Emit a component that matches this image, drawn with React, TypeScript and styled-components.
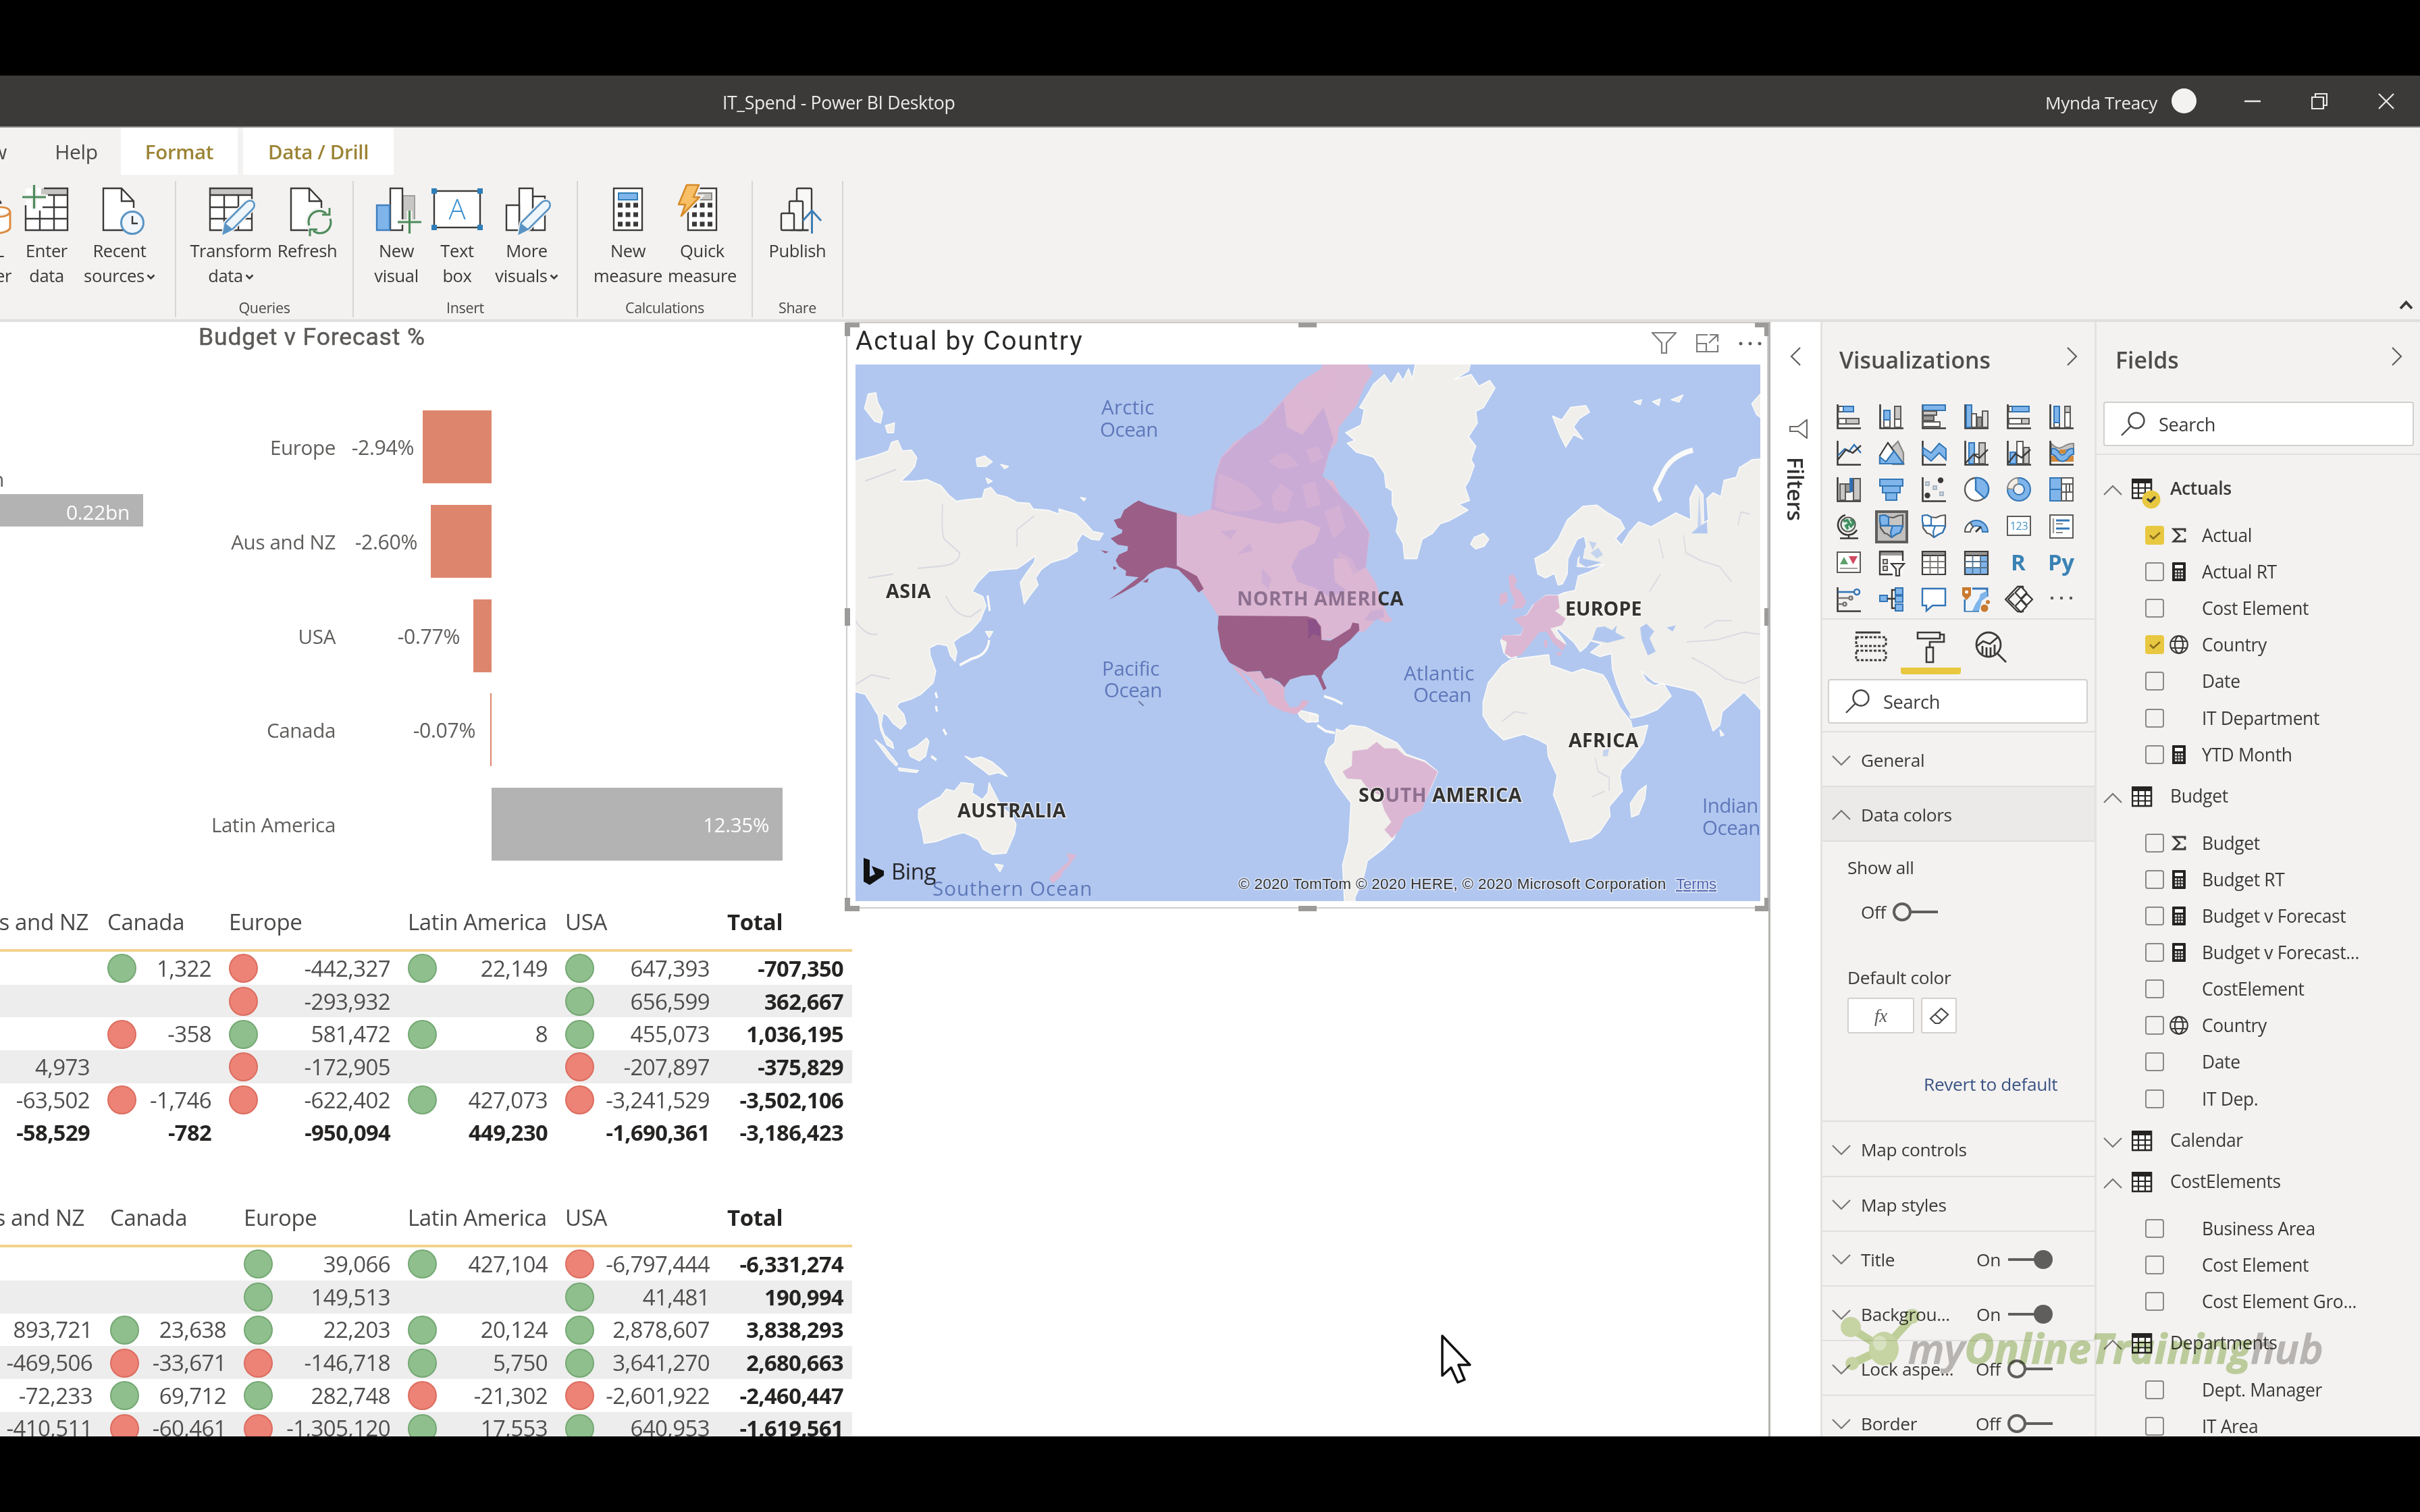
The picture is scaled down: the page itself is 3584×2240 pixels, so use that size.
import React from "react";
import styled, { createGlobalStyle } from "styled-components";

const UI = `"Open Sans", "Noto Sans", sans-serif`;
const INK = "#3b3a39";
const BLUE = "#7fb5ea";
const DBLUE = "#2f7fb8";
const GRAY = "#c8c6c4";

const Global = createGlobalStyle`
  *, *::before, *::after { box-sizing: border-box; }
  html, body { margin: 0; padding: 0; background: #000; }
  body { font-family: ${UI}; letter-spacing: -0.022em; }
  svg { display: block; flex: none; }
`;

/* ---------- window shell ---------- */

const Screen = styled.div`
  width: 3584px;
  height: 2240px;
  background: #000;
  padding: 112px 0;
  overflow: hidden;
  position: relative;
`;

const Window = styled.div`
  width: 100%;
  height: 2016px;
  background: #f3f2f1;
  display: flex;
  flex-direction: column;
  overflow: hidden;
`;

const TitleBar = styled.header`
  height: 77px;
  flex: none;
  background: #3b3a38;
  border-bottom: 2px solid #8a8886;
  color: #ecebea;
  display: flex;
  align-items: center;
  font-size: 26.6px;
`;

const AppTitle = styled.div`
  width: 344px;
  margin-left: 1070px;
  white-space: nowrap;
  padding-top: 4px;
`;

const UserName = styled.div`
  margin-left: 1615px;
  width: 187px;
  white-space: nowrap;
  padding-top: 4px;
  font-size: 26.2px;
`;

const Avatar = styled.div`
  width: 37px;
  height: 37px;
  border-radius: 50%;
  background: #f3f2f1;
`;

const WindowButtons = styled.div`
  display: flex;
  gap: 75px;
  margin-left: 71px;
`;

/* ---------- ribbon ---------- */

const Ribbon = styled.div`
  height: 288px;
  flex: none;
  border-bottom: 4px solid #e1dfdd;
  display: flex;
  flex-direction: column;
  color: ${INK};
`;

const Tabs = styled.nav`
  display: flex;
  height: 70px;
`;

const Tab = styled.div<{ $w: number; $active?: boolean }>`
  width: ${(p) => p.$w}px;
  display: flex;
  align-items: center;
  justify-content: center;
  white-space: nowrap;
  font-size: ${(p) => (p.$active ? 29.5 : 30)}px;
  font-weight: ${(p) => (p.$active ? 600 : 400)};
  color: ${(p) => (p.$active ? "#9c8436" : "#4a4948")};
  background: ${(p) => (p.$active ? "#fff" : "transparent")};
  & + & { margin-left: ${(p) => (p.$active ? 8 : 0)}px; }
`;

const CutTab = styled.div`
  width: 10px;
  margin-right: 45px;
  overflow: hidden;
  display: flex;
  align-items: center;
  justify-content: flex-end;
  font-size: 30px;
  color: #4a4948;
`;

const Groups = styled.div`
  display: flex;
  margin-top: 9px;
  height: 202px;
`;

const Group = styled.section<{ $w: number; $pad: number }>`
  width: ${(p) => p.$w}px;
  padding-left: ${(p) => p.$pad}px;
  border-right: 2px solid #d8d6d4;
  display: flex;
  flex-direction: column;
`;

const GroupButtons = styled.div`
  display: flex;
  height: 174px;
`;

const GroupName = styled.div<{ $pad: number }>`
  margin-left: -${(p) => p.$pad}px;
  text-align: center;
  font-size: 21.5px;
  line-height: 28px;
  color: #4a4948;
  margin-top: 8px;
`;

const RibbonButton = styled.div<{ $w: number }>`
  width: ${(p) => p.$w}px;
  flex: none;
  display: flex;
  flex-direction: column;
  align-items: center;
  padding-top: 4px;
  font-size: 25.5px;
  line-height: 36.500px;
  text-align: center;
  white-space: nowrap;
`;

const ButtonText = styled.div`
  margin-top: 5px;
`;

const Clipped = styled.div`
  width: 24px;
  flex: none;
  overflow: hidden;
  display: flex;
  flex-direction: column;
  align-items: flex-end;
  padding: 4px 7px 0 0;
  font-size: 25.5px;
  line-height: 36.500px;
  white-space: nowrap;
`;

const CollapseRibbon = styled.div`
  margin: 176px 10px 0 auto;
`;

const CaretSvg = styled.svg`
  display: inline-block;
  vertical-align: middle;
  margin-left: 3px;
`;

const Caret = () => (
  <CaretSvg width="13" height="9" viewBox="0 0 13 9">
    <path d="M1.5 1.5 6.5 6.5 11.5 1.5" fill="none" stroke={INK} strokeWidth="2.6" />
  </CaretSvg>
);

/* ---------- workspace ---------- */

const Workspace = styled.main`
  flex: 1;
  min-height: 0;
  display: flex;
`;

const Report = styled.div`
  width: 2622px;
  background: #fff;
  border-right: 3px solid #b5b3b1;
  display: flex;
  overflow: hidden;
  flex: none;
`;

const LeftColumn = styled.div`
  width: 1250px;
  flex: none;
  display: flex;
  flex-direction: column;
`;

const RightColumn = styled.div`
  flex: 1;
`;

const ChartArea = styled.section`
  height: 842px;
  flex: none;
  display: flex;
`;

const ActualsChart = styled.div`
  width: 212px;
  padding-top: 215px;
  flex: none;
  font-size: 30px;
  color: #605e5c;
  overflow: hidden;
`;

const CutLabel = styled.div`
  width: 6px;
  height: 40px;
  line-height: 36px;
  display: flex;
  justify-content: flex-end;
`;

const GreyBar = styled.div`
  height: 48px;
  line-height: 53px;
  background: #b3b3b3;
  color: #fff;
  text-align: right;
  padding-right: 20px;
  font-size: 30px;
`;

const VarianceChart = styled.div`
  flex: 1;
`;

const ChartTitle = styled.h2`
  margin: 0 0 0 82px;
  padding-top: 2px;
  height: 115px;
  font: 400 35.5px/40px Roboto, sans-serif;
  letter-spacing: 0.024em;
  color: #5d5b59;
  -webkit-text-stroke: 0.500px #5d5b59;
`;

const BarRow = styled.div`
  display: flex;
  height: 139.8px;
  padding-top: 16px;
  font-size: 29.6px;
  line-height: 110px;
  color: #605e5c;
`;

const BarLabel = styled.div`
  width: 285px;
  text-align: right;
  white-space: nowrap;
`;

const NegativeSide = styled.div`
  width: 231px;
  display: flex;
  justify-content: flex-end;
  font-size: 30.2px;
`;

const Bar = styled.div<{ $w: number; $neg?: boolean }>`
  width: ${(p) => p.$w}px;
  height: 108px;
  background: ${(p) => (p.$neg ? "#de866d" : "#b3b3b3")};
  color: #fff;
  text-align: right;
  padding-right: ${(p) => (p.$neg ? 0 : 20)}px;
`;

const BarValue = styled.span<{ $gap: number }>`
  margin-right: ${(p) => p.$gap}px;
`;

/* ---------- matrix ---------- */

const Matrix = styled.div<{ $cols: string; $gap: number }>`
  width: 1262px;
  display: grid;
  grid-template-columns: ${(p) => p.$cols};
  margin-bottom: ${(p) => p.$gap}px;
  font-size: 33px;
  color: #504e4d;
  flex: none;
`;

const HeadCell = styled.div<{ $bold?: boolean; $cut?: number }>`
  height: 91px;
  border-bottom: 4px solid #f3d28c;
  line-height: 93px;
  padding-left: 13px;
  white-space: nowrap;
  overflow: hidden;
  color: ${(p) => (p.$bold ? "#252423" : "#4a4948")};
  font-weight: ${(p) => (p.$bold ? 700 : 400)};
  ${(p) => p.$cut !== undefined && `display:flex; justify-content:flex-end; padding: 0 ${p.$cut}px 0 0;`}
`;

const Cell = styled.div<{ $band?: boolean; $bold?: boolean }>`
  height: 48.7px;
  line-height: 48px;
  display: flex;
  align-items: center;
  justify-content: space-between;
  padding: 1px 13px 0 13px;
  background: ${(p) => (p.$band ? "#ededed" : "transparent")};
  font-weight: ${(p) => (p.$bold ? 700 : 400)};
  color: ${(p) => (p.$bold ? "#252423" : "inherit")};
  font-size: ${(p) => (p.$bold ? 32.6 : 33)}px;
  letter-spacing: -0.018em;
  white-space: nowrap;
`;

const Dot = styled.span<{ $c?: string }>`
  width: 43px;
  height: 43px;
  border-radius: 50%;
  flex: none;
  visibility: ${(p) => (p.$c ? "visible" : "hidden")};
  background: ${(p) => (p.$c === "g" ? "#90bf8e" : "#ec8376")};
  border: 2px solid ${(p) => (p.$c === "g" ? "#74a873" : "#dc6d5f")};
`;

const CutCell = styled(Cell)<{ $r: number }>`
  justify-content: flex-end;
  padding: 1px ${(p) => p.$r}px 0 0;
`;

/* ---------- map visual ---------- */

const Visual = styled.section`
  position: relative;
  width: 1366px;
  height: 869px;
  margin-left: 3px;
  border: 2px solid #cfcdcb;
  padding: 0 8px 0 12px;
`;

const VisualHeader = styled.div`
  height: 61px;
  display: flex;
  align-items: center;
  color: #2b2a29;
  padding-bottom: 6px;
`;

const VisualTitle = styled.h2`
  margin: 0;
  flex: 1;
  font: 400 39px/50px Roboto, sans-serif;
  letter-spacing: 0.048em;
  padding-bottom: 4px;
`;

const VisualTools = styled.div`
  display: flex;
  gap: 29px;
  align-items: center;
  padding-top: 4px;
`;

const MapFrame = styled.div`
  width: 1340px;
  height: 795px;
  position: relative;
  overflow: hidden;
  background: #b1c7ef;
`;

const Layer = styled.svg`
  position: absolute;
  inset: 0;
`;

const Handle = styled.i<{ $x: number; $y: number; $w: number; $h: number; $b: string }>`
  position: absolute;
  left: ${(p) => p.$x}px;
  top: ${(p) => p.$y}px;
  width: ${(p) => p.$w}px;
  height: ${(p) => p.$h}px;
  border: 0 solid #9d9b99;
  border-width: ${(p) => p.$b};
`;

/* ---------- side panes ---------- */

const FiltersPane = styled.aside`
  width: 74px;
  background: #fff;
  flex: none;
  display: flex;
  flex-direction: column;
  align-items: center;
  padding-top: 37px;
`;

const FiltersLabel = styled.div`
  writing-mode: vertical-rl;
  font-weight: 600;
  font-size: 32.5px;
  line-height: 34px;
  letter-spacing: -0.01em;
  color: #323130;
  margin-top: 27px;
`;

const FilterGlyph = styled.div`
  margin: 79px 0 0 9px;
`;

const VizPane = styled.aside`
  width: 409px;
  flex: none;
  border-left: 3px solid #e4e2e0;
  border-right: 3px solid #e4e2e0;
  overflow: hidden;
  color: ${INK};
  font-size: 26.3px;
`;

const FieldsPane = styled.aside`
  flex: 1;
  overflow: hidden;
  color: ${INK};
  font-size: 26.4px;
`;

const PaneHeader = styled.div<{ $l: number; $r: number; $h: number }>`
  height: ${(p) => p.$h}px;
  display: flex;
  align-items: flex-start;
  justify-content: space-between;
  padding: 31px ${(p) => p.$r}px 0 ${(p) => p.$l}px;
  font-size: 33.8px;
  line-height: 50px;
  font-weight: 600;
  color: #4e4d4b;
  letter-spacing: 0;
  svg { margin-top: 6px; }
`;

const IconGrid = styled.div`
  height: 328px;
  padding: 9px 0 0 21px;
  display: grid;
  grid-template-columns: repeat(6, 63px);
  grid-auto-rows: 54.2px;
  border-bottom: 2px solid #e1dfdd;
`;

const IconCell = styled.div<{ $sel?: boolean }>`
  ${(p) =>
    p.$sel &&
    `margin: -6px 0 0 -6px; width: 49px; height: 49px; border: 4px solid #605e5c; background: #c2c0be; padding: 2px 0 0 2px;`}
`;

const LetterIcon = styled.span<{ $x: number }>`
  display: block;
  font-weight: 700;
  font-size: 33px;
  line-height: 33px;
  color: #3a82b4;
  margin-left: ${(p) => p.$x}px;
`;

const PaneTabs = styled.div`
  height: 88px;
  display: flex;
  padding: 17px 0 0 27px;
`;

const PaneTab = styled.div<{ $active?: boolean }>`
  width: 89px;
  height: 64px;
  display: flex;
  justify-content: center;
  border-bottom: ${(p) => (p.$active ? "10px solid #e8c840" : "0")};
  border-radius: 4px;
`;

const SearchBox = styled.div<{ $w: number; $l: number }>`
  width: ${(p) => p.$w}px;
  height: 66px;
  margin: 0 0 11px ${(p) => p.$l}px;
  background: #fff;
  border: 2px solid #d2d0ce;
  border-radius: 4px;
  display: flex;
  align-items: center;
  gap: 20px;
  padding-left: 24px;
  font-size: 27.2px;
`;

const SectionRow = styled.div<{ $open?: boolean }>`
  height: 81.2px;
  border-top: 2px solid #e1dfdd;
  background: ${(p) => (p.$open ? "#ebeae9" : "transparent")};
  display: flex;
  align-items: center;
  padding: 3px 61px 0 14px;
`;

const SectionName = styled.span`
  margin-left: 15px;
  flex: 1;
  white-space: nowrap;
`;

const ToggleWrap = styled.span`
  display: flex;
  align-items: center;
  gap: 10px;
`;

const DataColors = styled.div`
  height: 415px;
  border-top: 2px solid #e1dfdd;
  padding: 18px 0 0 37px;
  line-height: 40px;
`;

const ToggleLine = styled.div`
  margin: 26px 0 57px 20px;
`;

const ColorButtons = styled.div`
  display: flex;
  gap: 10px;
  margin-top: 10px;
`;

const SmallButton = styled.div<{ $w: number }>`
  width: ${(p) => p.$w}px;
  height: 53px;
  background: #fff;
  border: 2px solid #d2d0ce;
  border-radius: 3px;
  display: flex;
  align-items: center;
  justify-content: center;
  color: #5b5a58;
  font: italic 27px/40px "Liberation Serif", serif;
`;

const Revert = styled.div`
  margin: 55px 0 0 113px;
  color: #3c5484;
`;

const FieldList = styled.div`
  border-top: 2px solid #e1dfdd;
  padding-top: 15px;
`;

const TableRow = styled.div<{ $open?: boolean; $bold?: boolean }>`
  height: ${(p) => (p.$open ? 76.8 : 61.2)}px;
  padding: 15px 0 0 10px;
  display: flex;
  align-items: flex-start;
  line-height: 38px;
  font-weight: ${(p) => (p.$bold ? 600 : 400)};
`;

const RowChevron = styled.span`
  width: 42px;
  padding-top: 14px;
`;

const RowIcon = styled.span`
  width: 57px;
  padding-top: 5px;
`;

const FieldRow = styled.div`
  height: 54.15px;
  display: flex;
  align-items: center;
  padding-left: 72px;
`;

const Check = styled.span<{ $on?: boolean }>`
  width: 28px;
  height: 28px;
  border-radius: 4px;
  border: 2px solid ${(p) => (p.$on ? "#e8c840" : "#8a8886")};
  background: ${(p) => (p.$on ? "#e8c840" : "transparent")};
`;

const FieldIcon = styled.span`
  width: 56px;
  padding-left: 8px;
  display: flex;
`;

/* ---------- icons ---------- */

const L = { fill: "none", stroke: INK, strokeWidth: 2.4 };

const Chevron = ({ dir, c = "#605e5c" }: { dir: "l" | "r" | "u" | "d"; c?: string }) => {
  const d = { l: "M15 1 2 14 15 27", r: "M2 1 15 14 2 27", u: "M1 15 14 2 27 15", d: "M1 2 14 15 27 2" }[dir];
  const v = dir === "l" || dir === "r";
  return (
    <svg width={v ? 17 : 28} height={v ? 28 : 17} viewBox={v ? "0 0 17 28" : "0 0 28 17"}>
      <path d={d} fill="none" stroke={c} strokeWidth="2.2" />
    </svg>
  );
};

const SearchIcon = () => (
  <svg width="36" height="36" viewBox="0 0 36 36">
    <g fill="none" stroke="#4a4948" strokeWidth="2.4">
      <circle cx="23" cy="13" r="11.5" />
      <path d="M15 21 1 35" />
    </g>
  </svg>
);

const Toggle = ({ on }: { on?: boolean }) => (
  <svg width="68" height="30" viewBox="0 0 68 30">
    {on ? (
      <g>
        <path d="M1 15H42" stroke="#605e5c" strokeWidth="4" />
        <circle cx="53" cy="15" r="14" fill="#605e5c" />
      </g>
    ) : (
      <g fill="none" stroke="#605e5c" strokeWidth="4">
        <circle cx="14" cy="15" r="12" />
        <path d="M26 15H67" />
      </g>
    )}
  </svg>
);

const Page = () => (
  <g>
    <path d="M16 7H43L61 26V69H16Z" fill="#fff" />
    <path d="M50 69H16V7H43L61 26V36M43 7V26H61" {...L} />
  </g>
);

const Pencil = () => (
  <g>
    <path d="M29 74 32 58 62 28Q68 23 73 27 77 32 72 38L43 67Z" fill="#f3f2f1" stroke="#f3f2f1" strokeWidth="6" />
    <path d="M29 74 32 58 62 28Q68 23 73 27 77 32 72 38L43 67Z" fill="#eef5fb" stroke="#5a94c4" strokeWidth="2.6" />
    <path d="M29 74 32 59 42 67Z" fill="#5a94c4" />
  </g>
);

const Calc = ({ screen }: { screen: string }) => (
  <g>
    <rect x="19" y="7" width="42" height="62" fill="#fff" stroke={INK} strokeWidth="2.4" />
    <rect x="26" y="14" width="28" height="10" fill={screen} stroke={screen === GRAY ? "#8a8886" : DBLUE} strokeWidth="2" />
    {[32, 46, 60].map((y) => [28.5, 40, 51.5].map((x) => <rect key={`${x}-${y}`} x={x - 3.5} y={y - 3.5} width="7" height="7" fill={INK} />))}
  </g>
);

const ribbonArt: Record<string, React.ReactNode> = {
  enter: (
    <g>
      <rect x="9" y="7" width="62" height="62" fill="#fff" />
      <rect x="32" y="7" width="39" height="10" fill={GRAY} />
      <path d="M36 7H71V69H9V32M42 17H71M34 35H71M9 52H71M30 40V69M51 17V69" {...L} />
      <path d="M21.5 2V37M4 20H39" stroke="#f3f2f1" strokeWidth="8" />
      <path d="M21.5 2V37M4 20H39" stroke="#4d8b5b" strokeWidth="3.2" />
    </g>
  ),
  recent: (
    <g>
      <Page />
      <circle cx="59" cy="58" r="16.5" fill="#f0f6fc" stroke="#5a94c4" strokeWidth="3" />
      <path d="M59 48V59H67" {...L} />
    </g>
  ),
  transform: (
    <g>
      <rect x="9" y="7" width="62" height="62" fill="#fff" />
      <rect x="9" y="7" width="62" height="10" fill={GRAY} />
      <path d="M9 7H71V69H9ZM9 17H71M9 35H71M9 52H71M30 17V69M51 17V69" {...L} />
      <Pencil />
    </g>
  ),
  refresh: (
    <g>
      <Page />
      <circle cx="58.5" cy="57" r="21" fill="#f3f2f1" />
      <path d="M43 62A16 16 0 0 1 68 44M74 52A16 16 0 0 1 49 70M73 36V46H62M44 78V68H55" fill="none" stroke="#4d8b5b" strokeWidth="3" />
    </g>
  ),
  visual: (
    <g>
      <rect x="50" y="18" width="17" height="38" fill={GRAY} stroke="#a19f9d" strokeWidth="2" />
      <rect x="31" y="7" width="18" height="62" fill="#fff" stroke={INK} strokeWidth="2.4" />
      <rect x="11" y="32" width="19" height="37" fill={BLUE} stroke="#3f7fbf" strokeWidth="2.4" />
      <path d="M59.5 40V74M42 57H77" stroke="#f3f2f1" strokeWidth="8" />
      <path d="M59.5 40V74M42 57H77" stroke="#4d8b5b" strokeWidth="3.2" />
    </g>
  ),
  text: (
    <g>
      <rect x="6" y="11" width="68" height="54" fill="#fff" stroke={INK} strokeWidth="2.4" />
      {[[6, 11], [74, 11], [6, 65], [74, 65]].map(([x, y]) => <rect key={`${x}${y}`} x={x - 4} y={y - 4} width="8" height="8" fill={DBLUE} />)}
      <text x="40" y="53" textAnchor="middle" fontFamily="Open Sans" fontSize="42" fontWeight="300" fill="#3a8fd0">A</text>
    </g>
  ),
  more: (
    <g>
      <g fill="#fff" stroke={INK} strokeWidth="2.4">
        <rect x="49" y="19" width="18" height="50" />
        <rect x="29" y="7" width="20" height="62" />
        <rect x="10" y="32" width="19" height="37" />
      </g>
      <Pencil />
    </g>
  ),
  measure: <Calc screen={BLUE} />,
  quick: (
    <g>
      <Calc screen={GRAY} />
      <path d="M17 2H35L27 20H36L9 48 15 31H5Z" fill="#f4b85a" stroke="#f3f2f1" strokeWidth="7" />
      <path d="M17 2H35L27 20H36L9 48 15 31H5Z" fill="#f7bf66" stroke="#d68b2a" strokeWidth="2.6" strokeLinejoin="round" />
    </g>
  ),
  publish: (
    <g fill="#f8f8f7" stroke={INK} strokeWidth="2.4">
      <rect x="39" y="7" width="22" height="62" rx="2" />
      <rect x="28" y="26" width="20" height="43" rx="2" />
      <rect x="16" y="44" width="19" height="25" rx="2" />
      <path d="M35 69H60" />
      <path d="M61.5 42V74" stroke="#f3f2f1" strokeWidth="10" />
      <path d="M61.5 41V74M48 55 61.5 40 75 55" fill="none" stroke="#3f7fb4" strokeWidth="3" />
    </g>
  ),
};

const RibbonIcon = ({ name }: { name: string }) => (
  <svg width="80" height="76" viewBox="0 0 80 76" overflow="visible">{ribbonArt[name]}</svg>
);

const Axis = () => <path d="M1.5 0V35.5H36" fill="none" stroke={INK} strokeWidth="2.6" />;
const box = (x: number, y: number, w: number, h: number, f: string, s = "#5b5a58") => (
  <rect key={`${x}-${y}-${w}`} x={x} y={y} width={w} height={h} fill={f} stroke={s} strokeWidth="2" />
);
const SB = "#3275b5";

const MapShape = ({ base }: { base: string }) => (
  <g strokeWidth="2.2" strokeLinejoin="round">
    <path d="M1 2 8 1 14 4 21 5 28 2 35 1 35 18 31 27 26 29 18 34 12 29 8 28 2 20Z" fill={base} stroke="#5b5a58" />
    <path d="M1 2 8 1 14 4 14 16 3 17 1 10Z" fill={base === "#fff" ? "#fff" : BLUE} stroke={SB} />
    <path d="M20 17 35 17 31 27 26 29 18 34 17 26Z" fill={base === "#fff" ? "#fff" : BLUE} stroke={SB} />
    <path d="M3 17H20" stroke={SB} fill="none" />
  </g>
);

const GridTable = ({ heat }: { heat?: boolean }) => (
  <g>
    <rect x="1" y="1" width="34" height="34" fill="#fff" />
    {heat && <path d="M1 24H12V24H24V7H35V35H1Z" fill={BLUE} />}
    <rect x="1" y="1" width="34" height="6" fill="#9a9896" />
    <path d="M1 1H35V35H1ZM1 7H35" fill="none" stroke={INK} strokeWidth="2.2" />
    <path d="M1 16H35M1 25H35M12.5 7V35M24 7V35" stroke={heat ? "#55748f" : "#7a7876"} strokeWidth="1.8" fill="none" />
  </g>
);

const vizArt: React.ReactNode[] = [
  <g><Axis />{box(3, 3, 10, 8, "#fff")}{box(10, 3, 15, 8, BLUE, SB)}{box(3, 21, 13, 8, "#fff")}{box(14, 21, 19, 8, GRAY)}</g>,
  <g><Axis />{box(7, 22, 9, 12, "#fff")}{box(7, 9, 9, 14, BLUE, SB)}{box(23, 20, 9, 14, "#fff")}{box(23, 3, 9, 19, GRAY)}</g>,
  <g><Axis />{box(2, 1, 33, 8, BLUE, SB)}{box(2, 10, 20, 6, GRAY)}{box(2, 17, 16, 7, "#9a9896")}{box(2, 26, 25, 7, "#fff")}</g>,
  <g><Axis />{box(3, 1, 8, 33, BLUE, SB)}{box(11, 14, 7, 20, "#fff")}{box(19, 19, 7, 15, "#9a9896")}{box(27, 10, 8, 24, "#e1dfdd")}</g>,
  <g><Axis />{box(3, 3, 6, 8, "#fff")}{box(8, 3, 25, 8, BLUE, SB)}{box(3, 21, 19, 8, "#fff")}{box(22, 21, 11, 8, GRAY)}</g>,
  <g><Axis />{box(7, 26, 8, 8, "#fff")}{box(7, 3, 8, 24, BLUE, SB)}{box(23, 12, 8, 22, "#fff")}{box(23, 3, 8, 9, GRAY)}</g>,
  <g fill="none" strokeWidth="2.4"><Axis /><path d="M2 22 12 12 18 16 26 6 36 18" stroke={SB} /><path d="M2 28 14 13 24 18 36 7" stroke={INK} /></g>,
  <g strokeWidth="2.2"><path d="M17 12 28 1 36 18V35H20Z" fill={GRAY} stroke="#8a8886" /><path d="M1 22 13 3 25 20 13 34 1 34Z" fill="#fff" stroke={INK} /><path d="M1 24 10 31 22 15 36 34H1Z" fill={BLUE} stroke={SB} /></g>,
  <g><Axis /><path d="M2 10 14 18 26 4 36 12V28L26 18 14 30 2 20Z" fill={BLUE} stroke={SB} strokeWidth="2" /></g>,
  <g><Axis />{box(7, 3, 8, 31, BLUE, SB)}{box(15, 20, 7, 14, "#fff")}{box(22, 3, 9, 31, GRAY)}<path d="M2 33 14 20 22 26 35 13" {...L} /></g>,
  <g><Axis />{box(5, 17, 9, 17, BLUE, SB)}{box(15, 1, 9, 33, "#fff")}{box(25, 10, 8, 24, GRAY)}<path d="M2 33 13 19 22 25 35 13" {...L} /></g>,
  <g><path d="M3 4Q12 14 20 9T36 4V14Q28 12 20 15T3 12Z" fill={GRAY} stroke="#8a8886" strokeWidth="2" /><rect x="3" y="22" width="33" height="9" fill="#d08a3c" /><path d="M3 12Q10 10 15 18 19 24 24 18 29 10 36 12V20Q31 20 27 27 19 34 12 27 8 20 3 20Z" fill={BLUE} stroke={SB} strokeWidth="2" /><rect x="15" y="13" width="9" height="6" fill="#d08a3c" /><Axis /></g>,
  <g><Axis />{box(5, 10, 8, 24, GRAY)}{box(13, 10, 7, 12, "#9a9896")}{box(20, 2, 5, 19, "#2f6cb5", SB)}{box(25, 2, 10, 32, GRAY)}</g>,
  <g>{box(1, 3, 34, 10, BLUE, SB)}{box(5, 13, 26, 10, BLUE, SB)}{box(10, 23, 16, 11, BLUE, SB)}</g>,
  <g><Axis />{box(6, 7, 5, 5, "#cfd8e2", "#a9b5c2")}{box(17, 13, 5, 5, "#cfd8e2", "#a9b5c2")}{box(27, 22, 5, 5, "#cfd8e2", "#a9b5c2")}<circle cx="28" cy="4.5" r="4.2" fill={INK} /><circle cx="8.5" cy="27" r="4.2" fill={INK} /></g>,
  <g><circle cx="18" cy="18" r="17" fill="#fff" stroke="#5b5a58" strokeWidth="2.4" /><path d="M17 1A17 17 0 0 1 30 31L17 19Z" fill={BLUE} stroke={SB} strokeWidth="2.4" /></g>,
  <g fill="none"><circle cx="18" cy="18" r="12.5" stroke={SB} strokeWidth="11" /><circle cx="18" cy="18" r="12.5" stroke={BLUE} strokeWidth="7" /><path d="M5.5 18A12.5 12.5 0 0 1 17 5.5" stroke="#8a8886" strokeWidth="11" /><path d="M5.5 16.5A12.5 12.5 0 0 1 16 5.5" stroke="#f3ece4" strokeWidth="7" /></g>,
  <g>{box(1, 1, 17, 34, BLUE, SB)}{box(18, 1, 17, 34, "#fff")}<path d="M1 18H18" stroke={SB} strokeWidth="2" /><path d="M18 10H35M18 22H35M25 10V35M30 22V10" stroke="#5b5a58" strokeWidth="2" fill="none" /></g>,
  <g fill="none"><circle cx="17" cy="15" r="10.5" fill="#e9f4ec" stroke="#5b5a58" strokeWidth="2.2" /><path d="M10 10 16 9 19 14 14 17 17 22M21 7 25 13 20 19" stroke="#3f8f5f" strokeWidth="4" /><path d="M13 1A15 15 0 1 0 30 23M18 30V35M5 35.5H32" stroke={INK} strokeWidth="2.6" /></g>,
  <MapShape base="#c8c6c4" />,
  <MapShape base="#fff" />,
  <g><path d="M1 26A17 17 0 0 1 35 26H27A9 9 0 0 0 9 26Z" fill={BLUE} stroke={SB} strokeWidth="2" /><path d="M1 26A17 17 0 0 1 9 12L13 19A9 9 0 0 0 9 26Z" fill="#fff" stroke="#5b5a58" strokeWidth="2" /><path d="M17 26 25 18" stroke={INK} strokeWidth="3" /></g>,
  <g>{box(1, 3, 34, 28, "#fff")}<text x="18" y="23" textAnchor="middle" fontFamily="Open Sans" fontSize="16" fill="#4a94c8">123</text></g>,
  <g>{box(1, 1, 34, 34, "#fff")}<path d="M6 6V28" stroke="#a19f9d" strokeWidth="2.4" /><path d="M10 9H30M10 21H30" stroke={SB} strokeWidth="3" /><path d="M10 14H20M10 27H20" stroke="#8a8886" strokeWidth="2.2" /></g>,
  <g>{box(1, 2, 34, 30, "#fff")}<path d="M5 20 11 9 17 20Z" fill="#5fa06c" /><path d="M18 8H31L24.5 20Z" fill="#cf4a62" /><path d="M5 26H31" stroke="#a19f9d" strokeWidth="2" /></g>,
  <g><path d="M1 1H35V35H1Z" fill="#fff" /><rect x="1" y="1" width="34" height="6" fill="#9a9896" /><path d="M35 15V1H1V35H20" {...L} />{box(6, 13, 6, 6, "#e1dfdd")}{box(6, 23, 6, 6, "#e1dfdd")}<path d="M18 19H37L30 27V37H25V27Z" fill="#f3f2f1" stroke={INK} strokeWidth="2.2" /></g>,
  <GridTable />,
  <GridTable heat />,
  null,
  null,
  <g fill="none" strokeWidth="2.6"><Axis /><path d="M2 7H27" stroke={SB} /><circle cx="30" cy="7" r="4" stroke={SB} /><path d="M2 16H19M2 25H10" stroke="#7a7876" /><circle cx="21" cy="16" r="2.5" stroke="#7a7876" /><circle cx="12" cy="25" r="2.5" stroke="#7a7876" /></g>,
  <g>{box(1, 12, 11, 9, BLUE, SB)}{box(24, 1, 11, 10, BLUE, SB)}{box(24, 13, 11, 9, BLUE, SB)}{box(24, 25, 11, 10, BLUE, SB)}<path d="M12 17H24M24 4H19V31H24" {...L} /></g>,
  <g><path d="M1 2H35V27H16L7 35V27H1Z" fill="#fff" stroke={SB} strokeWidth="2.4" /></g>,
  <g><path d="M1 18V35H22" fill="none" stroke={SB} strokeWidth="3" /><path d="M12 2H34V14L24 22V35H2V20Z" fill="#eef4fa" /><path d="M12 2H34V14" fill="none" stroke={SB} strokeWidth="3" /><path d="M12 35 17 24 22 17 24 10 34 5V14L26 20 22 35Z" fill={BLUE} /><path d="M-3 0H10V12L3.5 19 -3 12Z" fill="#c87a2f" /><circle cx="3.5" cy="7" r="2.5" fill="#fff" /><circle cx="30" cy="31" r="5.5" fill="#c87a2f" /><circle cx="35" cy="22" r="3" fill="#c87a2f" /></g>,
  <g strokeWidth="2.4" stroke={INK} strokeLinejoin="round">
    <path d="M16 -1 -2 18 16 36 24 36 24 -1Z" fill="#f3f2f1" />
    <path d="M11 9 2 18 11 27" fill="none" />
    <path d="M21 -1 12.5 8 21 17 29.5 8ZM29.5 9.5 21.5 18 29.5 26.5 38 18ZM21 19 12.5 28 21 37 29.5 28Z" fill="#fff" />
  </g>,
  <g fill="#5b5a58"><rect x="2" y="14" width="4" height="4" /><rect x="16" y="14" width="4" height="4" /><rect x="30" y="14" width="4" height="4" /></g>,
];

const TableIcon = ({ badge }: { badge?: boolean }) => (
  <svg width="44" height="46" viewBox="0 0 44 46">
    <rect x="1" y="1" width="28" height="28" fill="#fff" stroke="#252423" strokeWidth="2.6" />
    <rect x="0" y="0" width="30" height="7" fill="#252423" />
    <path d="M1 14H29M1 21.5H29M10 7V29M20 7V29" stroke="#252423" strokeWidth="2.2" fill="none" />
    {badge && (
      <g>
        <circle cx="29" cy="31" r="13.5" fill="#e8c840" />
        <path d="M23 30 28 34 35 27" fill="none" stroke="#3b3a39" strokeWidth="3.5" />
      </g>
    )}
  </svg>
);

const fieldArt: Record<string, React.ReactNode> = {
  sum: <path d="M23 9V5H6L15 14 6 23H23V19" fill="none" stroke={INK} strokeWidth="2.8" />,
  calc: (
    <g>
      <rect x="4" y="0" width="20" height="28" rx="1" fill="#252423" />
      <rect x="8" y="4" width="12" height="5" fill="#fff" />
      {[12, 16.5, 21].map((y) => [8, 12.5, 17].map((x) => <rect key={`${x}${y}`} x={x} y={y} width="3" height="3" fill="#d8d6d4" />))}
    </g>
  ),
  globe: (
    <g fill="none" stroke={INK} strokeWidth="2.2">
      <circle cx="14" cy="14" r="12.8" />
      <ellipse cx="14" cy="14" rx="6" ry="12.8" />
      <path d="M2.5 9H25.5M2.5 19H25.5" />
    </g>
  ),
};

/* ---------- data ---------- */

type MatrixRow = { cut: string; cells: [string, string?][]; total: string; bold?: boolean };

const matrixOne: MatrixRow[] = [
  { cut: "", cells: [["1,322", "g"], ["-442,327", "r"], ["22,149", "g"], ["647,393", "g"]], total: "-707,350" },
  { cut: "", cells: [[""], ["-293,932", "r"], [""], ["656,599", "g"]], total: "362,667" },
  { cut: "", cells: [["-358", "r"], ["581,472", "g"], ["8", "g"], ["455,073", "g"]], total: "1,036,195" },
  { cut: "4,973", cells: [[""], ["-172,905", "r"], [""], ["-207,897", "r"]], total: "-375,829" },
  { cut: "-63,502", cells: [["-1,746", "r"], ["-622,402", "r"], ["427,073", "g"], ["-3,241,529", "r"]], total: "-3,502,106" },
  { cut: "-58,529", cells: [["-782"], ["-950,094"], ["449,230"], ["-1,690,361"]], total: "-3,186,423", bold: true },
];

const matrixTwo: MatrixRow[] = [
  { cut: "", cells: [[""], ["39,066", "g"], ["427,104", "g"], ["-6,797,444", "r"]], total: "-6,331,274" },
  { cut: "", cells: [[""], ["149,513", "g"], [""], ["41,481", "g"]], total: "190,994" },
  { cut: "893,721", cells: [["23,638", "g"], ["22,203", "g"], ["20,124", "g"], ["2,878,607", "g"]], total: "3,838,293" },
  { cut: "-469,506", cells: [["-33,671", "r"], ["-146,718", "r"], ["5,750", "g"], ["3,641,270", "g"]], total: "2,680,663" },
  { cut: "-72,233", cells: [["69,712", "g"], ["282,748", "g"], ["-21,302", "r"], ["-2,601,922", "r"]], total: "-2,460,447" },
  { cut: "-410,511", cells: [["-60,461", "r"], ["-1,305,120", "r"], ["17,553", "g"], ["640,953", "g"]], total: "-1,619,561" },
];

const MatrixVisual = ({ rows, cols, cut, cutHead, gap }: { rows: MatrixRow[]; cols: string; cut: number; cutHead: number; gap: number }) => (
  <Matrix $cols={cols} $gap={gap}>
    <HeadCell $cut={cutHead}>Aus and NZ</HeadCell>
    {["Canada", "Europe", "Latin America", "USA"].map((h) => <HeadCell key={h}>{h}</HeadCell>)}
    <HeadCell $bold>Total</HeadCell>
    {rows.map((r, i) => (
      <React.Fragment key={i}>
        <CutCell $r={cut} $band={i % 2 === 1 && !r.bold} $bold={r.bold}>{r.cut}</CutCell>
        {r.cells.map(([v, c], j) => (
          <Cell key={j} $band={i % 2 === 1 && !r.bold} $bold={r.bold}>
            {r.bold ? <span /> : <Dot $c={c} />}
            <span>{v}</span>
          </Cell>
        ))}
        <CutCell $r={13} $band={i % 2 === 1 && !r.bold} $bold>{r.total}</CutCell>
      </React.Fragment>
    ))}
  </Matrix>
);

const variance = [
  { name: "Europe", value: "-2.94%", w: 102, gap: 13 },
  { name: "Aus and NZ", value: "-2.60%", w: 90, gap: 20 },
  { name: "USA", value: "-0.77%", w: 27, gap: 20 },
  { name: "Canada", value: "-0.07%", w: 2, gap: 22 },
];

type Field = { name: string; icon?: "sum" | "calc" | "globe"; on?: boolean };
const tables: { name: string; open: boolean; badge?: boolean; fields: Field[] }[] = [
  {
    name: "Actuals", open: true, badge: true, fields: [
      { name: "Actual", icon: "sum", on: true }, { name: "Actual RT", icon: "calc" }, { name: "Cost Element" },
      { name: "Country", icon: "globe", on: true }, { name: "Date" }, { name: "IT Department" }, { name: "YTD Month", icon: "calc" },
    ],
  },
  {
    name: "Budget", open: true, fields: [
      { name: "Budget", icon: "sum" }, { name: "Budget RT", icon: "calc" }, { name: "Budget v Forecast", icon: "calc" },
      { name: "Budget v Forecast...", icon: "calc" }, { name: "CostElement" }, { name: "Country", icon: "globe" }, { name: "Date" }, { name: "IT Dep." },
    ],
  },
  { name: "Calendar", open: false, fields: [] },
  { name: "CostElements", open: true, fields: [{ name: "Business Area" }, { name: "Cost Element" }, { name: "Cost Element Gro..." }] },
  { name: "Departments", open: true, fields: [{ name: "Dept. Manager" }, { name: "IT Area" }] },
];

/* ---------- map ---------- */

const LAND = "#f0efeb";
const PINK = "#dcb7d3";
const LILAC = "#c5a9d6";
const PLUM = "#9b5f87";
const SEA = "#b1c7ef";

const MapArt = () => (
  <Layer width="1340" height="795" viewBox="59 139 2918 1385" preserveAspectRatio="none">
    <g fill={LAND} stroke="#fafaf8" strokeWidth="3" strokeLinejoin="round">
      <path d="M40 395 70 385 120 375 165 362 175 340 195 335 210 362 240 360 257 380 250 402 232 420 205 440 250 440 290 436 335 452 362 478 385 492 415 488 468 484 475 462 495 456 515 475 545 480 580 495 620 497 632 512 680 515 715 525 715 512 770 525 800 548 825 570 858 575 845 592 820 590 790 576 772 600 775 620 740 638 690 650 658 668 640 690 648 708 622 735 603 757 597 730 590 702 612 675 635 650 640 632 610 650 580 666 540 668 490 672 455 700 435 725 470 738 480 762 462 798 430 828 400 840 375 855 386 880 380 905 365 890 355 865 325 860 298 870 300 890 318 930 310 960 270 990 240 1002 200 1012 192 1022 215 1042 222 1065 205 1080 180 1065 162 1045 148 1038 142 1070 152 1095 178 1115 182 1130 160 1120 140 1082 132 1045 110 1015 90 990 40 980Z" />
      <path d="M100 215 125 212 130 235 147 262 140 290 120 285 88 252ZM155 297 185 290 182 315 162 315ZM448 382 475 375 500 390 480 402 452 402ZM527 397 552 402 540 408ZM480 432 500 440 486 446ZM785 482 802 485 795 491ZM478 828 502 828 490 844Z" />
      <path d="M122 1108 150 1125 195 1170 190 1175 165 1155ZM197 1180 262 1187 255 1192 200 1187ZM228 1135 255 1125 288 1103 296 1112 285 1150 265 1162 235 1150ZM412 1150 435 1157 465 1152 500 1165 530 1185 548 1202 520 1192 490 1198 470 1185 440 1168Z" />
      <path d="M317 985 322 1000M318 1020 322 1035M342 1080 352 1095M485 735 492 775M490 850Q485 890 435 898L395 915M303 1150 320 1160" fill="none" strokeWidth="7" />
      <path d="M262 1288 300 1268 332 1255 352 1235 378 1240 400 1218 440 1222 435 1245 468 1262 485 1245 490 1218 510 1250 530 1280 560 1300 577 1325 572 1350 545 1400 500 1403 470 1390 455 1365 430 1355 408 1347 370 1355 320 1370 280 1375 275 1350 262 1310ZM508 1428 535 1432 525 1448Z" />
      <path d="M1482 1030 1510 1035 1548 1042 1552 1060 1515 1062 1492 1048Z" />
      <path d="M1548 1070 1575 1085 1605 1090M1570 995 1600 1003 1630 1015" fill="none" strokeWidth="7" />
    </g>
    <g transform="translate(1524.6 0)">
      <g fill={LAND} stroke="#fafaf8" strokeWidth="3" strokeLinejoin="round">
        <path d="M342 130 520 130 512 155 465 178 520 165 545 195 580 180 597 200 560 250 535 260 540 290 512 325 535 350 520 385 530 400 512 440 500 455 515 490 480 500 510 515 450 542 420 550 395 575 362 590 345 640 305 640 300 600 278 570 285 535 265 500 265 465 245 455 240 420 205 378 150 365 120 342 145 335 115 315 165 295 175 255 160 250 205 190 240 165 262 190 285 160 300 180 318 150 330 175Z" />
        <path d="M518 603 530 585 560 575 577 590 562 608 535 615ZM782 272 812 282 840 250 890 245 902 262 870 278 850 300 880 332 850 320 825 352 805 320ZM1453 215 1425 240 1440 268 1460 280ZM1045 235 1070 230 1065 243ZM1105 235 1130 228 1125 245ZM1165 230 1203 218 1190 236Z" />
        <path d="M1235 360Q1160 375 1135 425L1113 460 1130 492" fill="none" strokeWidth="14" />
        <path d="M1470 382 1425 385 1385 405 1375 430 1335 438 1325 480 1300 470 1280 485 1285 540 1270 548 1268 475 1245 450 1225 485 1228 540 1180 522 1130 545 1100 558 1060 545 1030 572 1005 605 985 588 1015 562 1000 540 960 522 925 502 880 505 830 540 800 590 770 620 725 640 735 680 760 690 788 678 800 708 815 705 830 680 832 640 862 590 885 582 892 610 865 640 862 660 900 662 950 655 900 675 865 685 855 722 820 728 800 735 760 735 720 760 700 785 665 797 690 820 680 838 625 840 615 852 625 882 642 896 665 895 690 865 720 835 760 820 790 838 815 868 825 860 795 825 800 820 850 855 872 880 890 868 905 852 940 860 905 882 935 893 972 885 975 925 990 965 1035 1052 1075 1045 1120 1030 1165 995 1140 962 1110 968 1085 955 1068 930 1110 958 1190 972 1240 982 1265 1002 1300 1085 1322 1070 1330 1035 1400 985 1430 1010 1470 1045Z" />
        <path d="M650 900 700 895 770 888 775 915 800 922 845 935 880 925 945 940 958 955 1000 1025 1035 1060 1040 1078 1090 1070 1075 1115 1040 1155 1005 1185 1000 1205 1008 1240 965 1280 968 1305 935 1345 905 1362 840 1372 810 1300 785 1250 797 1200 768 1150 765 1120 738 1108 690 1093 625 1108 580 1075 558 1045 558 1010 575 960 620 915Z" />
        <path d="M1085 1225 1080 1260 1060 1300 1037 1307 1033 1272 1060 1240ZM1322 1082 1335 1095 1325 1098ZM0 1040 28 1045 22 1062 0 1060Z" />
        <path d="M85 1080 105 1085 130 1070 180 1075 210 1088 280 1115 310 1145 370 1162 412 1190 385 1240 355 1290 300 1310 270 1362 235 1390 185 1420 180 1440 170 1470 145 1515 148 1540 112 1540 105 1430 125 1370 132 1270 85 1220 48 1165 60 1130 80 1115Z" />
      </g>
      <g fill={SEA}>
        <path d="M910 850 925 818 950 815 975 825 990 812 985 830 1018 845 960 857ZM1065 818 1085 808 1110 828 1095 845 1115 880 1090 890 1070 850ZM1150 818 1180 812 1170 828ZM955 945 970 955 1035 1045 1018 1040ZM875 600 888 605 880 640 940 650 890 662 868 650ZM1250 560 1280 545 1282 575 1230 575Z" />
        <path d="M905 625 930 612 945 630 925 640ZM945 1135 965 1130 960 1150 945 1150ZM900 595 925 600 912 618ZM1255 470 1262 560 1250 560Z" opacity=".7" />
      </g>
      <g fill="none" stroke="#dadae2" strokeWidth="3.5">
        <path d="M1205 580 1212 625 1260 645 1320 660 1360 700M1125 590 1140 640M1130 680 1095 725M920 1155 930 1190 965 1205 965 1240M620 1060 660 1035 700 1040M1380 555 1390 520 1420 525M1270 820 1310 800 1360 800M1215 855 1310 850 1400 830 1450 835M1230 895 1290 920 1340 950 1400 962 1450 945M910 1255 950 1240" />
      </g>
      <g fill={PINK}>
        <path d="M105 1190 135 1175 137 1137 185 1132 215 1113 240 1130 280 1130 305 1148 370 1165 412 1190 385 1240 360 1290 305 1310 290 1340 265 1362 240 1340 262 1320 240 1290 225 1250 190 1238 165 1210 120 1208Z" />
        <path d="M640 685 655 680 668 695 660 712 680 725 698 752 685 768 648 770 662 752 645 720ZM612 732 635 726 637 752 612 762ZM658 795 700 785 725 755 760 735 800 735 805 768 790 775 825 795 812 812 775 820 795 845 825 862 815 878 785 858 762 828 740 830 705 865 682 888 650 895 628 885 635 855 618 848 622 838 680 838 688 820ZM755 850 765 850 765 870 755 868ZM790 885 812 880 808 892Z" />
      </g>
    </g>
    <path d="M340 500Q335 570 345 590L395 625Q395 655 330 660L260 665M635 530 580 565 580 610M350 735Q380 790 430 790L465 770M100 690 180 680M90 440 190 410M59 800Q90 840 130 835M59 965 110 940 170 950" fill="none" stroke="#d6d7e0" strokeWidth="3.5" />
    <path d="M1095 522 1135 532 1205 513 1215 480 1218 430 1235 382 1280 340 1340 312 1370 290 1440 228 1490 185 1560 150 1568 130 1700 130 1728 160 1700 195 1675 245 1618 300 1612 340 1585 365 1575 405 1562 430 1600 440 1630 490 1680 520 1718 575 1710 620 1705 662 1735 700 1760 755 1775 785 1792 800 1770 806 1740 795 1700 828 1660 830 1640 845 1560 850 1515 797 1228 788 1215 770 1185 735 1150 690 1095 660Z" fill={PINK} />
    <path d="M1205 513 1218 430 1240 380 1320 318 1375 290 1440 232 1450 300 1500 320 1568 250 1600 330 1565 425 1600 460 1650 500 1715 572 1705 662 1665 680 1640 640 1600 640 1605 700 1640 720 1590 740 1540 715 1485 700 1465 660 1490 620 1540 600 1560 560 1500 540 1420 550 1350 540 1280 528Z" fill={LILAC} opacity=".85" />
    <path d="M1230 420 1262 428 1290 440 1320 452 1350 475 1372 500 1340 515 1260 520 1218 505ZM1450 235 1500 230 1520 270 1500 305 1455 280ZM1390 390 1420 372 1450 366 1490 400 1430 410ZM1510 360 1550 350 1568 380 1530 395ZM1400 480 1430 445 1470 470 1450 520 1410 515ZM1500 450 1540 440 1560 500 1515 510ZM1570 520 1620 500 1640 560 1600 590ZM1500 200 1560 160 1620 165 1560 230ZM1610 620 1660 640 1690 690 1640 690Z" fill={PINK} opacity=".55" />
    <path d="M1235 570 1290 565 1270 590ZM1290 630 1330 600 1340 620ZM1370 665 1400 690 1390 720 1368 700Z" fill={LILAC} opacity=".6" />
    <path d="M1700 800 1720 775 1760 770 1765 790 1730 800Z" fill={LILAC} opacity=".7" />
    <path d="M972 490 1000 500 1040 510 1095 522 1095 658 1130 672 1160 685 1182 718 1165 728 1140 700 1100 668 1060 662 1030 668 1005 680 990 692 960 710 915 730 876 746 925 718 972 688 930 684 932 672 908 660 898 645 908 630 936 620 938 608 905 604 882 588 918 574 920 566 905 560 892 540 914 535 925 515 955 498ZM850 618 875 622 865 627ZM985 700 1005 690 1000 702ZM890 660 902 664 892 670Z" fill={PLUM} />
    <path d="M1230 787 1515 789 1540 795 1560 815 1562 850 1590 852 1610 843 1655 820 1662 805 1682 808 1684 825 1655 850 1620 872 1612 898 1570 930 1562 945 1578 975 1568 980 1550 948 1540 940 1500 942 1460 952 1442 972 1425 958 1400 948 1380 950 1365 930 1320 932 1265 908 1238 872 1227 820Z" fill={PLUM} />
    <path d="M1515 797 1545 798 1558 820 1558 842 1535 835 1518 848 1520 820Z" fill="#8a5289" />
    <path d="M1272 915 1320 932 1365 932 1380 952 1400 948 1442 972 1442 1000 1460 1025 1488 1022 1500 1005 1522 1008 1510 1022 1480 1042 1440 1035 1392 1015 1375 985 1330 945 1300 930 1370 1000 1345 985 1310 950Z" fill="#deb3ce" />
    <path d="M740 1400 772 1405 745 1435 730 1445 720 1462 695 1478 683 1465 720 1440 748 1420Z" fill={PINK} />
    <path d="M972 1008 988 1020" stroke="#6f78a0" strokeWidth="4" />
  </Layer>
);

const seaLabels: [string, number, number, number][] = [
  ["Arctic", 364, 74, 78], ["Ocean", 362, 107, 86], ["Pacific", 365, 461, 85], ["Ocean", 368, 493, 86],
  ["Atlantic", 812, 468, 104], ["Ocean", 826, 500, 86], ["Indian", 1254, 664, 83], ["Ocean", 1254, 697, 86], ["Southern Ocean", 114, 787, 236],
];

const MapLabels = () => (
  <Layer width="1340" height="795" viewBox="0 0 1340 795" fontFamily="Open Sans">
    <g fontSize="29.5" fill="#5f78bb">
      {seaLabels.map(([t, x, y, w], i) => <text key={i} x={x} y={y} textLength={w}>{t}</text>)}
    </g>
    <g fontSize="28.5" fontWeight="700" fill="#333231" stroke="#f7f6f4" strokeWidth="3" strokeOpacity=".8" paintOrder="stroke">
      <text x="45" y="346" textLength="66">ASIA</text>
      <text x="151" y="671" textLength="160">AUSTRALIA</text>
      <text x="1051" y="372" textLength="113">EUROPE</text>
      <text x="1056" y="567" textLength="103">AFRICA</text>
      <text x="745" y="648" textLength="241">SO<tspan fill="#8d7090" stroke="none">UTH</tspan> AMERICA</text>
      <text x="565" y="357" textLength="246" stroke="none"><tspan fill="#8d7090">NORTH AMERI</tspan>CA</text>
    </g>
    <path d="M12 731 21 734V759L29 755 24 743 42 750V757L21 771 12 766Z" fill="#111" />
    <text x="53" y="763" fontSize="33" fill="#26252a" textLength="66">Bing</text>
    <g fontFamily="Liberation Sans" fontSize="22.5" stroke="#eef2fa" strokeWidth="3" strokeOpacity=".75" paintOrder="stroke">
      <text x="567" y="776.5" fill="#333231" textLength="633">© 2020 TomTom © 2020 HERE, © 2020 Microsoft Corporation</text>
      <text x="1215" y="776.5" fill="#5266b0" textDecoration="underline" textLength="60">Terms</text>
    </g>
  </Layer>
);

const CountryMap = () => (
  <Visual>
    <VisualHeader>
      <VisualTitle>Actual by Country</VisualTitle>
      <VisualTools>
        <svg width="37" height="33" viewBox="0 0 37 33"><path d="M1 1H36L22 16V31H15V16Z" fill="none" stroke="#7d7b79" strokeWidth="2.2" /></svg>
        <svg width="34" height="29" viewBox="0 0 34 29"><path d="M17 2H1V27H32V17M1 15H15V27M20 2H32V12M32 2 19 14" fill="none" stroke="#7d7b79" strokeWidth="2.2" /></svg>
        <svg width="34" height="6" viewBox="0 0 34 6"><g fill="#605e5c"><circle cx="3" cy="3" r="2.5" /><circle cx="17" cy="3" r="2.5" /><circle cx="31" cy="3" r="2.5" /></g></svg>
      </VisualTools>
    </VisualHeader>
    <MapFrame>
      <MapArt />
      <MapLabels />
    </MapFrame>
    <Handle $x={-4} $y={-1} $w={22} $h={20} $b="7px 0 0 8px" />
    <Handle $x={1344} $y={-1} $w={22} $h={20} $b="7px 8px 0 0" />
    <Handle $x={-4} $y={851} $w={22} $h={20} $b="0 0 8px 8px" />
    <Handle $x={1344} $y={851} $w={22} $h={20} $b="0 8px 8px 0" />
    <Handle $x={668} $y={-1} $w={27} $h={7} $b="7px 0 0 0" />
    <Handle $x={668} $y={863} $w={27} $h={8} $b="8px 0 0 0" />
    <Handle $x={-4} $y={422} $w={8} $h={26} $b="0 0 0 8px" />
    <Handle $x={1358} $y={422} $w={8} $h={26} $b="0 0 0 8px" />
  </Visual>
);

/* ---------- overlays ---------- */

const Watermark = styled.svg`
  position: absolute;
  left: 2716px;
  top: 1930px;
  opacity: 0.78;
  mix-blend-mode: multiply;
`;

const Cursor = styled.svg`
  position: absolute;
  left: 2131px;
  top: 1974px;
`;

const RB = ({ w, icon, a, b, caret }: { w: number; icon: string; a: string; b?: string; caret?: boolean }) => (
  <RibbonButton $w={w}>
    <RibbonIcon name={icon} />
    <ButtonText>
      {a}
      {b && <><br />{b}{caret && <Caret />}</>}
    </ButtonText>
  </RibbonButton>
);

const Section = ({ name, open, on }: { name: string; open?: boolean; on?: boolean }) => (
  <SectionRow $open={open}>
    <Chevron dir={open ? "u" : "d"} c="#797775" />
    <SectionName>{name}</SectionName>
    {on !== undefined && <ToggleWrap>{on ? "On" : "Off"}<Toggle on={on} /></ToggleWrap>}
  </SectionRow>
);

export default function App() {
  return (
    <Screen>
      <Global />
      <Window>
        <TitleBar>
          <AppTitle>IT_Spend - Power BI Desktop</AppTitle>
          <UserName>Mynda Treacy</UserName>
          <Avatar />
          <WindowButtons>
            <svg width="24" height="24" viewBox="0 0 24 24"><path d="M0 12H24" stroke="#ecebea" strokeWidth="2.5" /></svg>
            <svg width="24" height="24" viewBox="0 0 24 24"><path d="M1 6H18V23H1ZM6 6V1H23V18H18" fill="none" stroke="#ecebea" strokeWidth="2.2" /></svg>
            <svg width="24" height="24" viewBox="0 0 24 24"><path d="M1 1 23 23M23 1 1 23" stroke="#ecebea" strokeWidth="2.2" /></svg>
          </WindowButtons>
        </TitleBar>

        <Ribbon>
          <Tabs>
            <CutTab>w</CutTab>
            <Tab $w={116}>Help</Tab>
            <Tab $w={173} $active>Format</Tab>
            <Tab $w={223} $active>Data / Drill</Tab>
          </Tabs>
          <Groups>
            <Group $w={261} $pad={0}>
              <GroupButtons>
                <Clipped>
                  <svg width="30" height="76" viewBox="0 0 30 76">
                    <path d="M4 20Q12 24 14 30" stroke={INK} strokeWidth="4" fill="none" />
                    <path d="M0 36Q26 32 28 42V66Q24 74 0 74M0 48Q24 52 28 42" fill="#fff" stroke="#dd8a3e" strokeWidth="3" />
                  </svg>
                  <ButtonText>L<br />er</ButtonText>
                </Clipped>
                <RB w={90} icon="enter" a="Enter" b="data" />
                <RB w={126} icon="recent" a="Recent" b="sources" caret />
              </GroupButtons>
            </Group>
            <Group $w={263} $pad={13}>
              <GroupButtons>
                <RB w={136} icon="transform" a="Transform" b="data" caret />
                <RB w={90} icon="refresh" a="Refresh" />
              </GroupButtons>
              <GroupName $pad={13}>Queries</GroupName>
            </Group>
            <Group $w={332} $pad={18}>
              <GroupButtons>
                <RB w={90} icon="visual" a="New" b="visual" />
                <RB w={90} icon="text" a="Text" b="box" />
                <RB w={116} icon="more" a="More" b="visuals" caret />
              </GroupButtons>
              <GroupName $pad={18}>Insert</GroupName>
            </Group>
            <Group $w={259} $pad={19}>
              <GroupButtons>
                <RB w={110} icon="measure" a="New" b="measure" />
                <RB w={110} icon="quick" a="Quick" b="measure" />
              </GroupButtons>
              <GroupName $pad={19}>Calculations</GroupName>
            </Group>
            <Group $w={134} $pad={0}>
              <GroupButtons>
                <RB w={132} icon="publish" a="Publish" />
              </GroupButtons>
              <GroupName $pad={0}>Share</GroupName>
            </Group>
            <CollapseRibbon>
              <svg width="21" height="16" viewBox="0 0 21 16"><path d="M2 13 10.5 4 19 13" fill="none" stroke={INK} strokeWidth="4" /></svg>
            </CollapseRibbon>
          </Groups>
        </Ribbon>

        <Workspace>
          <Report>
            <LeftColumn>
              <ChartArea>
                <ActualsChart>
                  <CutLabel>0.22bn</CutLabel>
                  <GreyBar>0.22bn</GreyBar>
                </ActualsChart>
                <VarianceChart>
                  <ChartTitle>Budget v Forecast %</ChartTitle>
                  {variance.map((v) => (
                    <BarRow key={v.name}>
                      <BarLabel>{v.name}</BarLabel>
                      <NegativeSide>
                        <BarValue $gap={v.gap}>{v.value}</BarValue>
                        <Bar $w={v.w} $neg />
                      </NegativeSide>
                    </BarRow>
                  ))}
                  <BarRow>
                    <BarLabel>Latin America</BarLabel>
                    <NegativeSide />
                    <Bar $w={431}>12.35%</Bar>
                  </BarRow>
                </VarianceChart>
              </ChartArea>
              <MatrixVisual rows={matrixOne} cols="146px 180px 265px 233px 240px 198px" cut={13} cutHead={15} gap={55} />
              <MatrixVisual rows={matrixTwo} cols="150px 198px 243px 233px 240px 198px" cut={13} cutHead={25} gap={0} />
            </LeftColumn>
            <RightColumn>
              <CountryMap />
            </RightColumn>
          </Report>

          <FiltersPane>
            <Chevron dir="l" />
            <FilterGlyph>
              <svg width="27" height="29" viewBox="0 0 27 29"><path d="M26 1V28L13 18H1V11H13Z" fill="none" stroke="#6b6967" strokeWidth="2.2" /></svg>
            </FilterGlyph>
            <FiltersLabel>Filters</FiltersLabel>
          </FiltersPane>

          <VizPane>
            <PaneHeader $l={25} $r={25} $h={113}>Visualizations<Chevron dir="r" /></PaneHeader>
            <IconGrid>
              {vizArt.map((art, i) => (
                <IconCell key={i} $sel={i === 19}>
                  {i === 28 ? <LetterIcon $x={6}>R</LetterIcon> : i === 29 ? <LetterIcon $x={-2}>Py</LetterIcon> : (
                    <svg width="36" height="37" viewBox="0 0 36 37" overflow="visible">{art}</svg>
                  )}
                </IconCell>
              ))}
            </IconGrid>
            <PaneTabs>
              <PaneTab>
                <svg width="48" height="46" viewBox="0 0 48 46">
                  <path d="M1 2H38" stroke={INK} strokeWidth="3" />
                  <path d="M2 9H46V22H2ZM2 29H46V43H2Z" fill="none" stroke={INK} strokeWidth="3" strokeDasharray="4 2.5" />
                </svg>
              </PaneTab>
              <PaneTab $active>
                <svg width="43" height="49" viewBox="0 0 43 49">
                  <path d="M2 2H35V11H2ZM35 5H41V16H20V24M15 24H25V46H15Z" fill="none" stroke={INK} strokeWidth="2.6" />
                </svg>
              </PaneTab>
              <PaneTab>
                <svg width="48" height="48" viewBox="0 0 48 48">
                  <g fill="none" stroke={INK} strokeWidth="2.8">
                    <circle cx="20" cy="20" r="18" />
                    <path d="M33 33 46 46M3 22 12 15 22 19 35 8M11 22V34M17 24V37M23 24V37M29 20V34" />
                  </g>
                </svg>
              </PaneTab>
            </PaneTabs>
            <SearchBox $w={385} $l={8}><SearchIcon />Search</SearchBox>
            <Section name="General" />
            <Section name="Data colors" open />
            <DataColors>
              Show all
              <ToggleLine><ToggleWrap>Off<Toggle /></ToggleWrap></ToggleLine>
              Default color
              <ColorButtons>
                <SmallButton $w={99}>fx</SmallButton>
                <SmallButton $w={53}>
                  <svg width="30" height="26" viewBox="0 0 30 26"><path d="M2 17 18 2 28 11 15 24H9ZM9 11 19 20" fill="none" stroke="#4a4948" strokeWidth="2.2" /></svg>
                </SmallButton>
              </ColorButtons>
              <Revert>Revert to default</Revert>
            </DataColors>
            <Section name="Map controls" />
            <Section name="Map styles" />
            <Section name="Title" on />
            <Section name="Backgrou..." on />
            <Section name="Lock aspe..." on={false} />
            <Section name="Border" on={false} />
          </VizPane>

          <FieldsPane>
            <PaneHeader $l={28} $r={26} $h={118}>Fields<Chevron dir="r" /></PaneHeader>
            <SearchBox $w={460} $l={10}><SearchIcon />Search</SearchBox>
            <FieldList>
              {tables.map((t) => (
                <React.Fragment key={t.name}>
                  <TableRow $open={t.open} $bold={t.badge}>
                    <RowChevron><Chevron dir={t.open ? "u" : "d"} c="#797775" /></RowChevron>
                    <RowIcon><TableIcon badge={t.badge} /></RowIcon>
                    {t.name}
                  </TableRow>
                  {t.fields.map((f) => (
                    <FieldRow key={f.name}>
                      <Check $on={f.on}>
                        {f.on && <svg width="24" height="24" viewBox="0 0 24 24"><path d="M5 12 10 17 20 8" fill="none" stroke="#8a6d1c" strokeWidth="2.5" /></svg>}
                      </Check>
                      <FieldIcon>{f.icon && <svg width="28" height="28" viewBox="0 0 28 28">{fieldArt[f.icon]}</svg>}</FieldIcon>
                      {f.name}
                    </FieldRow>
                  ))}
                </React.Fragment>
              ))}
            </FieldList>
          </FieldsPane>
        </Workspace>
      </Window>

      <Cursor width="50" height="80" viewBox="0 0 50 80">
        <path d="M5 5V64L18 52 28 74 38 70 29 48H46Z" fill="#fff" stroke="#111" strokeWidth="3.5" strokeLinejoin="round" />
      </Cursor>

      <Watermark width="740" height="130" viewBox="0 0 740 130">
        <g stroke="#b9cf86" strokeWidth="12" fill="none"><path d="M25 38 74 68M116 22 76 66M27 90 74 68" /></g>
        <g fill="#c3d694">
          <ellipse cx="74" cy="68" rx="22" ry="25" />
          <circle cx="25" cy="36" r="15" />
          <circle cx="116" cy="20" r="11" />
          <circle cx="27" cy="90" r="10" />
        </g>
        <ellipse cx="68" cy="60" rx="10" ry="11" fill="#dbe8bd" />
        <text x="110" y="90" textLength="614" fontFamily="Open Sans" fontStyle="italic" fontWeight="600" fontSize="60" fill="#aeacaa" stroke="#aeacaa" strokeWidth="1.5">
          my<tspan fill="#b4cb8a" stroke="#b4cb8a" fontWeight="700">OnlineTraining</tspan>hub
        </text>
      </Watermark>
    </Screen>
  );
}
